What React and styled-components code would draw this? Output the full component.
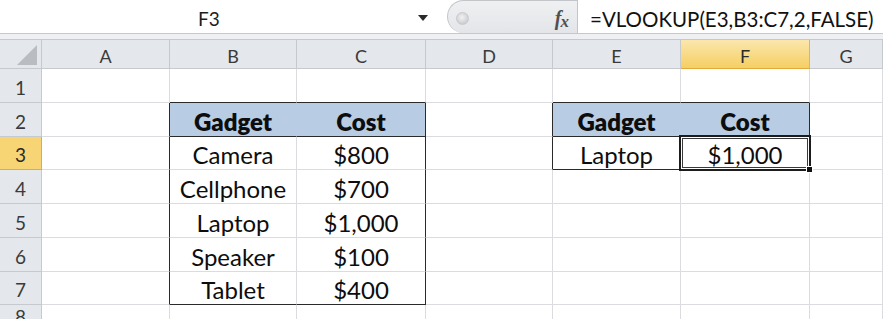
import React from 'react';
import styled, { createGlobalStyle } from 'styled-components';

const Global = createGlobalStyle`
  html, body { margin: 0; padding: 0; background: #fff; overflow: hidden; }
  body { font-family: Lato, "Liberation Sans", sans-serif; }
  * { box-sizing: border-box; }
`;

const Window = styled.div`
  width: 883px;
  height: 319px;
  overflow: hidden;
  display: flex;
  flex-direction: column;
  background: #fff;
`;

const FormulaBar = styled.div`
  display: flex;
  height: 34px;
  flex-shrink: 0;
  border-bottom: 1px solid #c5c8cd;
`;

const NameBox = styled.div`
  width: 447px;
  display: flex;
  align-items: center;
  background: #fff;
`;

const NameText = styled.span`
  width: 418px;
  text-align: center;
  font-size: 19px;
  color: #1e1e1e;
  padding-top: 4px;
`;

const DropArrow = styled.span`
  width: 0;
  height: 0;
  margin-top: 3px;
  border-left: 5px solid transparent;
  border-right: 5px solid transparent;
  border-top: 6px solid #2a2a2a;
`;

const FxArea = styled.div`
  width: 130px;
  display: flex;
  align-items: center;
  justify-content: space-between;
  padding: 0 9px 0 8px;
  background: linear-gradient(#eef0f2, #e3e5e8);
  border: 1px solid #c3c5c9;
  border-right: none;
  border-bottom: none;
  border-radius: 17px 0 0 17px;
`;

const Grip = styled.span`
  width: 13px;
  height: 13px;
  border-radius: 50%;
  background: radial-gradient(circle at 45% 40%, #f2f2f2, #bfc0c3);
  border: 1px solid #c8c9cc;
  margin-top: 2px;
`;

const FxLabel = styled.span`
  font-family: "Liberation Serif", "DejaVu Serif", serif;
  font-style: italic;
  font-weight: bold;
  font-size: 20px;
  color: #505050;
  letter-spacing: -1px;
  padding-top: 2px;
`;

const FxSub = styled.span`
  font-size: 17px;
  position: relative;
  top: 2px;
`;

const FormulaInput = styled.div`
  flex: 1;
  display: flex;
  align-items: center;
  padding: 4px 0 0 12px;
  border-left: 1px solid #c3c5c9;
  font-size: 20.5px;
  color: #111;
  white-space: nowrap;
`;

const Band = styled.div`
  height: 6px;
  flex-shrink: 0;
  background: #eef0f3;
  border-bottom: 1px solid #c5c8cd;
`;

const Sheet = styled.div`
  display: grid;
  grid-template-columns: 42px 128px 127px 129px 127px 128px 129px 1fr;
  grid-template-rows: 29px 34px 34px 33px 34px 34px 34px 33px 20px;
`;

const HeaderBase = styled.div`
  display: flex;
  align-items: center;
  justify-content: center;
  font-size: 18px;
  color: #3a3a3a;
  padding-top: 3px;
  background: #e4e7eb;
  border-right: 1px solid #c6c9ce;
  border-bottom: 1px solid #c6c9ce;
`;

const CornerCell = styled(HeaderBase)`
  align-items: flex-end;
  justify-content: flex-end;
  padding: 0 4px 3px 0;
`;

const CornerTriangle = styled.span`
  width: 0;
  height: 0;
  border-left: 20px solid transparent;
  border-bottom: 20px solid #b9bcc1;
`;

const ColHeader = styled(HeaderBase)`
  ${(p) =>
    p.$active &&
    `
    background: linear-gradient(#fbe7ad, #f5cf62);
    border-right-color: #e0b55a;
    border-bottom-color: #e3a93e;
    color: #2b2b2b;
  `}
`;

const RowHeader = styled(HeaderBase)`
  font-size: 19px;
  ${(p) =>
    p.$active &&
    `
    background: #f7d474;
    border-right-color: #e2aa3f;
    border-bottom-color: #e2aa3f;
    color: #2b2b2b;
  `}
`;

const Cell = styled.div`
  position: relative;
  z-index: ${(p) => (p.$selected ? 2 : 'auto')};
  display: flex;
  align-items: center;
  justify-content: center;
  padding-top: 3px;
  font-size: 24px;
  color: #0d0d0d;
  font-weight: ${(p) => (p.$bold ? 800 : 400)};
  background: ${(p) => p.$fill || '#fff'};
  border-right: 1px solid ${(p) => p.$right};
  border-bottom: 1px solid ${(p) => p.$bottom};
  white-space: nowrap;
`;

const Selection = styled.span`
  position: absolute;
  left: -2px;
  top: -2px;
  right: -2px;
  bottom: -2px;
  border: 2px solid #1c1c1c;
  box-shadow: inset 0 0 0 1px #fff, inset 0 0 0 2px #3a3a3a;
  pointer-events: none;
`;

const FillHandle = styled.span`
  position: absolute;
  right: -4px;
  bottom: -4px;
  width: 7px;
  height: 7px;
  background: #111;
  border: 1px solid #fff;
`;

const COLS = ['A', 'B', 'C', 'D', 'E', 'F', 'G'];
const GRID = '#dadcdf';
const DARK = '#2a2a2a';
const HEAD_FILL = '#b8cce4';

const TABLES = [
  { c0: 2, c1: 3, r0: 2, r1: 7 },
  { c0: 5, c1: 6, r0: 2, r1: 3 },
];

const DATA = {
  2: { 2: 'Gadget', 3: 'Cost', 5: 'Gadget', 6: 'Cost' },
  3: { 2: 'Camera', 3: '$800', 5: 'Laptop', 6: '$1,000' },
  4: { 2: 'Cellphone', 3: '$700' },
  5: { 2: 'Laptop', 3: '$1,000' },
  6: { 2: 'Speaker', 3: '$100' },
  7: { 2: 'Tablet', 3: '$400' },
};

const inHeader = (r, c) =>
  TABLES.some((t) => r === t.r0 && c >= t.c0 && c <= t.c1);

function borderRight(r, c) {
  for (const t of TABLES) {
    if (r >= t.r0 && r <= t.r1 && (c === t.c0 - 1 || c === t.c1)) return DARK;
    if (r === t.r0 && c >= t.c0 && c < t.c1) return HEAD_FILL;
  }
  return GRID;
}

function borderBottom(r, c) {
  for (const t of TABLES) {
    if (c >= t.c0 && c <= t.c1 && (r === t.r0 - 1 || r === t.r0 || r === t.r1)) return DARK;
  }
  return GRID;
}

export default function App() {
  const rows = [1, 2, 3, 4, 5, 6, 7, 8];
  return (
    <Window>
      <Global />
      <FormulaBar>
        <NameBox>
          <NameText>F3</NameText>
          <DropArrow />
        </NameBox>
        <FxArea>
          <Grip />
          <FxLabel>
            f<FxSub>x</FxSub>
          </FxLabel>
        </FxArea>
        <FormulaInput>=VLOOKUP(E3,B3:C7,2,FALSE)</FormulaInput>
      </FormulaBar>
      <Band />
      <Sheet>
        <CornerCell>
          <CornerTriangle />
        </CornerCell>
        {COLS.map((c) => (
          <ColHeader key={c} $active={c === 'F'}>
            {c}
          </ColHeader>
        ))}
        {rows.map((r) => (
          <React.Fragment key={r}>
            <RowHeader $active={r === 3}>{r}</RowHeader>
            {COLS.map((_, i) => {
              const c = i + 1;
              const text = (DATA[r] && DATA[r][c]) || '';
              const head = inHeader(r, c);
              const selected = r === 3 && c === 6;
              return (
                <Cell
                  key={c}
                  $selected={selected}
                  $fill={head ? HEAD_FILL : undefined}
                  $bold={head}
                  $right={borderRight(r, c)}
                  $bottom={borderBottom(r, c)}
                >
                  {text}
                  {selected && (
                    <Selection>
                      <FillHandle />
                    </Selection>
                  )}
                </Cell>
              );
            })}
          </React.Fragment>
        ))}
      </Sheet>
    </Window>
  );
}
